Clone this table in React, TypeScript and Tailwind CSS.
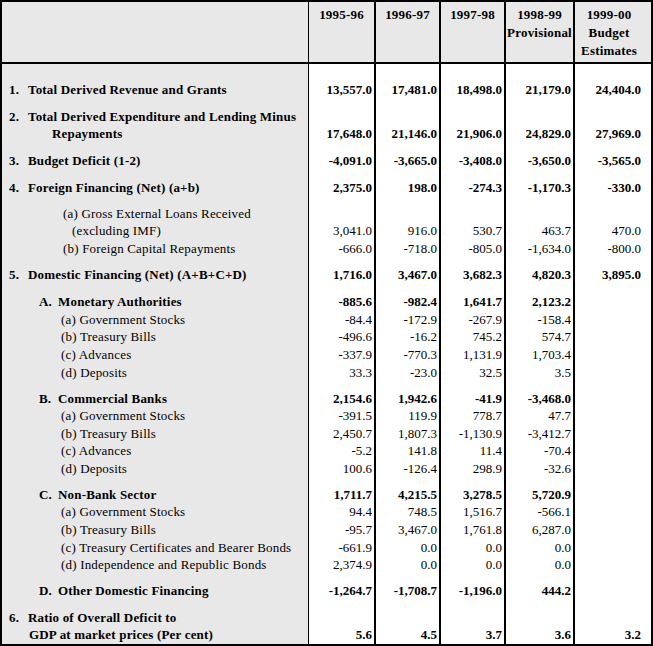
import React from 'react';

type Line = { text: string; pad: string; num?: string };

interface Row {
  lines: Line[];
  bold: boolean;
  values: string[];
  h: string;
}

const years: string[][] = [
  ['1995-96'],
  ['1996-97'],
  ['1997-98'],
  ['1998-99', 'Provisional'],
  ['1999-00', 'Budget', 'Estimates'],
];

// column widths, the last one sits against the outer border
const colClass = [
  'w-[67px] border-r-2',
  'w-[65px] border-r-2',
  'w-[65px] border-r-2',
  'w-[69px] border-r-2',
  'w-[68px]',
];

const main = (num: string, text: string): Line => ({ num, text, pad: 'pl-[7px]' });
const group = (num: string, text: string): Line => ({ num, text, pad: 'pl-[37px]' });
const sub = (text: string): Line => ({ text, pad: 'pl-[59px]' });

const rows: Row[] = [
  { lines: [main('1.', 'Total Derived Revenue and Grants')], bold: true, h: 'h-[34.8px]', values: ['13,557.0', '17,481.0', '18,498.0', '21,179.0', '24,404.0'] },
  {
    lines: [main('2.', 'Total Derived Expenditure and Lending Minus'), { text: 'Repayments', pad: 'pl-[50px]' }],
    bold: true,
    h: 'h-[44px]',
    values: ['17,648.0', '21,146.0', '21,906.0', '24,829.0', '27,969.0'],
  },
  { lines: [main('3.', 'Budget Deficit (1-2)')], bold: true, h: 'h-[27px]', values: ['-4,091.0', '-3,665.0', '-3,408.0', '-3,650.0', '-3,565.0'] },
  { lines: [main('4.', 'Foreign Financing (Net) (a+b)')], bold: true, h: 'h-[27px]', values: ['2,375.0', '198.0', '-274.3', '-1,170.3', '-330.0'] },
  {
    lines: [{ text: '(a) Gross External Loans Received', pad: 'pl-[61px]' }, { text: '(excluding IMF)', pad: 'pl-[70px]' }],
    bold: false,
    h: 'h-[43px]',
    values: ['3,041.0', '916.0', '530.7', '463.7', '470.0'],
  },
  { lines: [{ text: '(b) Foreign Capital Repayments', pad: 'pl-[61px]' }], bold: false, h: 'h-[18px]', values: ['-666.0', '-718.0', '-805.0', '-1,634.0', '-800.0'] },
  { lines: [main('5.', 'Domestic Financing (Net) (A+B+C+D)')], bold: true, h: 'h-[26px]', values: ['1,716.0', '3,467.0', '3,682.3', '4,820.3', '3,895.0'] },

  { lines: [group('A.', 'Monetary Authorities')], bold: true, h: 'h-[27px]', values: ['-885.6', '-982.4', '1,641.7', '2,123.2', ''] },
  { lines: [sub('(a) Government Stocks')], bold: false, h: 'h-[18px]', values: ['-84.4', '-172.9', '-267.9', '-158.4', ''] },
  { lines: [sub('(b) Treasury Bills')], bold: false, h: 'h-[17px]', values: ['-496.6', '-16.2', '745.2', '574.7', ''] },
  { lines: [sub('(c) Advances')], bold: false, h: 'h-[18px]', values: ['-337.9', '-770.3', '1,131.9', '1,703.4', ''] },
  { lines: [sub('(d) Deposits')], bold: false, h: 'h-[18px]', values: ['33.3', '-23.0', '32.5', '3.5', ''] },

  { lines: [group('B.', 'Commercial Banks')], bold: true, h: 'h-[26px]', values: ['2,154.6', '1,942.6', '-41.9', '-3,468.0', ''] },
  { lines: [sub('(a) Government Stocks')], bold: false, h: 'h-[17px]', values: ['-391.5', '119.9', '778.7', '47.7', ''] },
  { lines: [sub('(b) Treasury Bills')], bold: false, h: 'h-[18px]', values: ['2,450.7', '1,807.3', '-1,130.9', '-3,412.7', ''] },
  { lines: [sub('(c) Advances')], bold: false, h: 'h-[17px]', values: ['-5.2', '141.8', '11.4', '-70.4', ''] },
  { lines: [sub('(d) Deposits')], bold: false, h: 'h-[18px]', values: ['100.6', '-126.4', '298.9', '-32.6', ''] },

  { lines: [group('C.', 'Non-Bank Sector')], bold: true, h: 'h-[26px]', values: ['1,711.7', '4,215.5', '3,278.5', '5,720.9', ''] },
  { lines: [sub('(a) Government Stocks')], bold: false, h: 'h-[17px]', values: ['94.4', '748.5', '1,516.7', '-566.1', ''] },
  { lines: [sub('(b) Treasury Bills')], bold: false, h: 'h-[18px]', values: ['-95.7', '3,467.0', '1,761.8', '6,287.0', ''] },
  { lines: [sub('(c) Treasury Certificates and Bearer Bonds')], bold: false, h: 'h-[18px]', values: ['-661.9', '0.0', '0.0', '0.0', ''] },
  { lines: [sub('(d) Independence and Republic Bonds')], bold: false, h: 'h-[17px]', values: ['2,374.9', '0.0', '0.0', '0.0', ''] },

  { lines: [group('D.', 'Other Domestic Financing')], bold: true, h: 'h-[26px]', values: ['-1,264.7', '-1,708.7', '-1,196.0', '444.2', ''] },
  {
    lines: [main('6.', 'Ratio of Overall Deficit to'), { text: 'GDP at market prices (Per cent)', pad: 'pl-[27px]' }],
    bold: true,
    h: 'h-[44px]',
    values: ['5.6', '4.5', '3.7', '3.6', '3.2'],
  },
];

const LabelLine: React.FC<{ line: Line }> = ({ line }) => (
  <div className={`${line.pad} whitespace-nowrap tracking-[0.18px]`}>
    {line.num && <span className="inline-block w-[19px]">{line.num}</span>}
    {line.text}
  </div>
);

export default function App() {
  return (
    <div className="w-[653px] h-[646px] bg-white font-['Liberation_Serif',serif] text-[13px] text-black">
      <div className="border-2 border-black">
        {/* header */}
        <div className="flex h-[62px] border-b-2 border-black bg-[#e8e8e8] font-bold">
          <div className="w-[307px] border-r border-black"></div>
          {years.map((lines, i) => (
            <div key={i} className={`${colClass[i]} border-black pt-[4px] text-center leading-[18px] tracking-[0.2px]`}>
              {lines.map((l) => (
                <div key={l} className="whitespace-nowrap">{l}</div>
              ))}
            </div>
          ))}
        </div>

        {/* body */}
        {rows.map((row, r) => (
          <div key={r} className={`flex ${row.h} leading-[17.6px] ${row.bold ? 'font-bold' : 'font-normal'}`}>
            <div className="w-[307px] border-r border-black bg-[#e8e8e8] flex flex-col justify-end">
              {row.lines.map((line, i) => (
                <LabelLine key={i} line={line} />
              ))}
            </div>
            {row.values.map((v, i) => (
              <div key={i} className={`${colClass[i]} border-black flex flex-col justify-end pr-[2px] text-right whitespace-nowrap`}>
                {v}
              </div>
            ))}
          </div>
        ))}
      </div>
    </div>
  );
}
